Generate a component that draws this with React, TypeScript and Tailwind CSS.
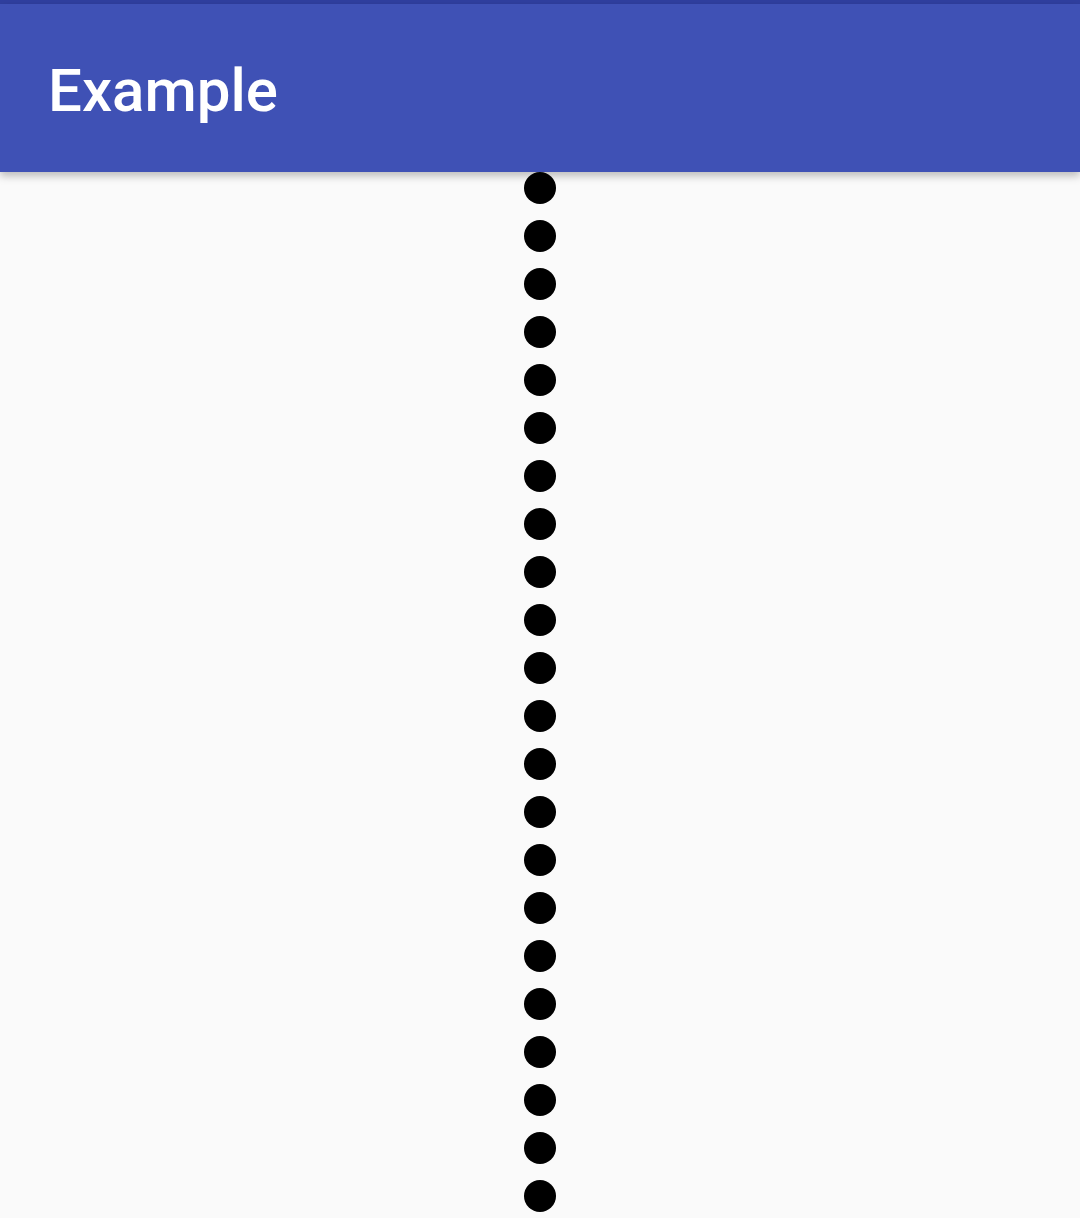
export default function App() {
  const dots = Array.from({ length: 22 }, (_, i) => i);
  return (
    <div className="w-[1080px] h-[1218px] overflow-hidden bg-[#fafafa] flex flex-col" style={{ fontFamily: "Roboto, 'Noto Sans', sans-serif" }}>
      <div className="h-[4px] bg-[#303f9f] shrink-0" />
      <div className="relative z-10 h-[168px] shrink-0 bg-[#3f51b5] flex items-center pl-[48px] pt-[6px] shadow-[0_4px_8px_rgba(0,0,0,0.25)]">
        <span className="text-white text-[60px] font-medium leading-none tracking-[0px]">Example</span>
      </div>
      <div className="flex flex-col items-center gap-4">
        {dots.map((i) => (
          <div key={i} className="w-[32px] h-[32px] rounded-full bg-black shrink-0" />
        ))}
      </div>
    </div>
  );
}
